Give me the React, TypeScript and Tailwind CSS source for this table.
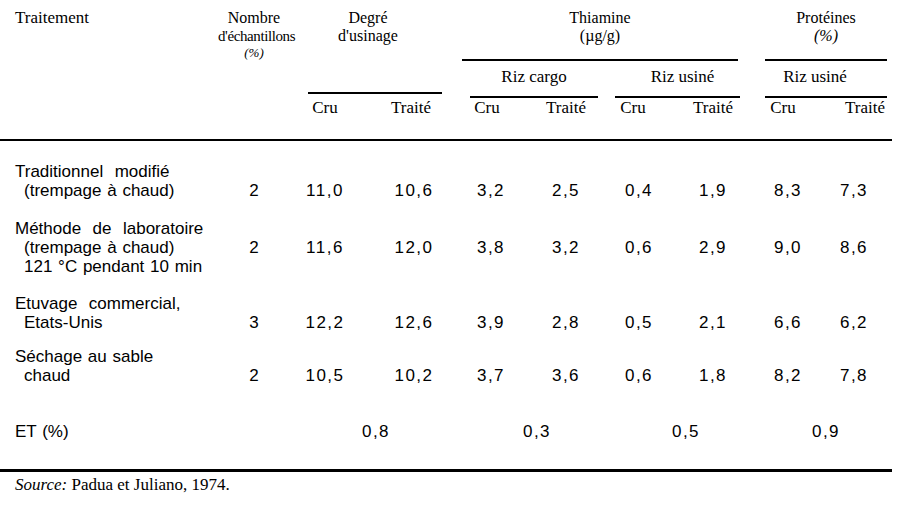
const cols =
  "grid grid-cols-[218px_72px_70px_102px_58px_92px_54px_94px_56px_76px]";

type Row = {
  lines: string[];
  count: string;
  values: string[];
  gap: string;
};

const rows: Row[] = [
  {
    lines: ["Traditionnel  modifié", "(trempage à chaud)"],
    count: "2",
    values: ["11,0", "10,6", "3,2", "2,5", "0,4", "1,9", "8,3", "7,3"],
    gap: "mt-[21px]",
  },
  {
    lines: ["Méthode  de  laboratoire", "(trempage à chaud)", "121 °C pendant 10 min"],
    count: "2",
    values: ["11,6", "12,0", "3,8", "3,2", "0,6", "2,9", "9,0", "8,6"],
    gap: "mt-[19px]",
  },
  {
    lines: ["Etuvage  commercial,", "Etats-Unis"],
    count: "3",
    values: ["12,2", "12,6", "3,9", "2,8", "0,5", "2,1", "6,6", "6,2"],
    gap: "mt-[18px]",
  },
  {
    lines: ["Séchage au sable", "chaud"],
    count: "2",
    values: ["10,5", "10,2", "3,7", "3,6", "0,6", "1,8", "8,2", "7,8"],
    gap: "mt-[15px]",
  },
];

// small per-column nudges so values sit like the scan
const valuePad = ["", "pl-[6px]", "", "", "", "", "", ""];

const SubHeads = () => {
  const labels = ["Cru", "Traité", "Cru", "Traité", "Cru", "Traité", "Cru", "Traité"];
  const pads = ["", "", "pr-[8px]", "", "pr-[12px]", "", "pr-[10px]", "pl-[22px]"];
  return (
    <>
      {labels.map((label, i) => (
        <div key={i} className={`row-start-3 pt-[1px] text-center text-[17px] ${pads[i]}`}>
          {label}
        </div>
      ))}
    </>
  );
};

const Header = () => (
  <div
    className={`${cols} grid-rows-[61px_37px_41px] font-['Liberation_Serif',serif] text-[16px] leading-[18px] text-black`}
  >
    <div className="col-start-1 row-start-1 row-span-3 pl-[15px] pt-[9px] text-[17px]">
      Traitement
    </div>

    <div className="col-start-2 row-start-1 row-span-3 pt-[9px] text-center">
      <div>Nombre</div>
      <div className="whitespace-nowrap text-[15px] tracking-[-0.4px]">
        d'échantillons
      </div>
      <div className="text-[13px] leading-[15px] italic">(%)</div>
    </div>

    <div className="col-start-3 col-span-2 row-start-1 row-span-2 flex flex-col">
      <div className="pt-[9px] pr-[16px] text-center">
        <div>Degré</div>
        <div>d'usinage</div>
      </div>
      <div className="mt-auto mb-[4px] ml-[18px] mr-[20px] h-[2px] bg-black" />
    </div>

    <div className="col-start-5 col-span-4 row-start-1 mr-[22px] flex flex-col">
      <div className="pt-[9px] text-center">
        <div>Thiamine</div>
        <div>(µg/g)</div>
      </div>
      <div className="mt-auto h-[2px] bg-black" />
    </div>

    <div className="col-start-9 col-span-2 row-start-1 mx-[5px] flex flex-col">
      <div className="pt-[9px] text-center">
        <div>Protéines</div>
        <div className="italic">(%)</div>
      </div>
      <div className="mt-auto h-[2px] bg-black" />
    </div>

    <div className="col-start-5 col-span-2 row-start-2 ml-[8px] mr-[14px] flex flex-col">
      <div className="pt-[7px] text-center text-[17px]">Riz cargo</div>
      <div className="mt-auto h-[2px] bg-black" />
    </div>

    <div className="col-start-7 col-span-2 row-start-2 ml-[3px] mr-[20px] flex flex-col">
      <div className="pt-[7px] pl-[10px] text-center text-[17px]">Riz usiné</div>
      <div className="mt-auto h-[2px] bg-black" />
    </div>

    <div className="col-start-9 col-span-2 row-start-2 mx-[5px] flex flex-col">
      <div className="pt-[7px] pr-[22px] text-center text-[17px]">Riz usiné</div>
      <div className="mt-auto h-[2px] bg-black" />
    </div>

    <SubHeads />
  </div>
);

const DataRow = ({ row }: { row: Row }) => (
  <div className={`${cols} ${row.gap}`}>
    <div>
      {row.lines.map((line, i) => (
        <div
          key={i}
          className={`whitespace-pre ${i === 0 ? "pl-[15px]" : "pl-[24px]"}`}
        >
          {line}
        </div>
      ))}
    </div>
    <div className="pt-[19px] text-center">{row.count}</div>
    {row.values.map((v, i) => (
      <div key={i} className={`pt-[19px] text-center tracking-[1.5px] ${valuePad[i]}`}>
        {v}
      </div>
    ))}
  </div>
);

export default function App() {
  return (
    <div className="h-[505px] w-[905px] overflow-hidden bg-white text-black">
      <Header />
      <div className="h-[2px] w-[892px] bg-black" />

      <div className="font-['Liberation_Sans',Arial,sans-serif] text-[17px] leading-[19px] [word-spacing:1px]">
        {rows.map((row, i) => (
          <DataRow key={i} row={row} />
        ))}

        <div className={`${cols} mt-[37px]`}>
          <div className="pl-[15px]">ET (%)</div>
          <div />
          <div className="col-span-2 text-center tracking-[1.5px]">0,8</div>
          <div className="col-span-2 text-center tracking-[1.5px]">0,3</div>
          <div className="col-span-2 text-center tracking-[1.5px]">0,5</div>
          <div className="col-span-2 text-center tracking-[1.5px]">0,9</div>
        </div>
      </div>

      <div className="mt-[28px] h-[3px] w-[892px] bg-black" />

      <p className="mt-[3px] pl-[15px] font-['Liberation_Serif',serif] text-[17px] leading-[19px]">
        <span className="italic">Source:</span> Padua et Juliano, 1974.
      </p>
    </div>
  );
}
